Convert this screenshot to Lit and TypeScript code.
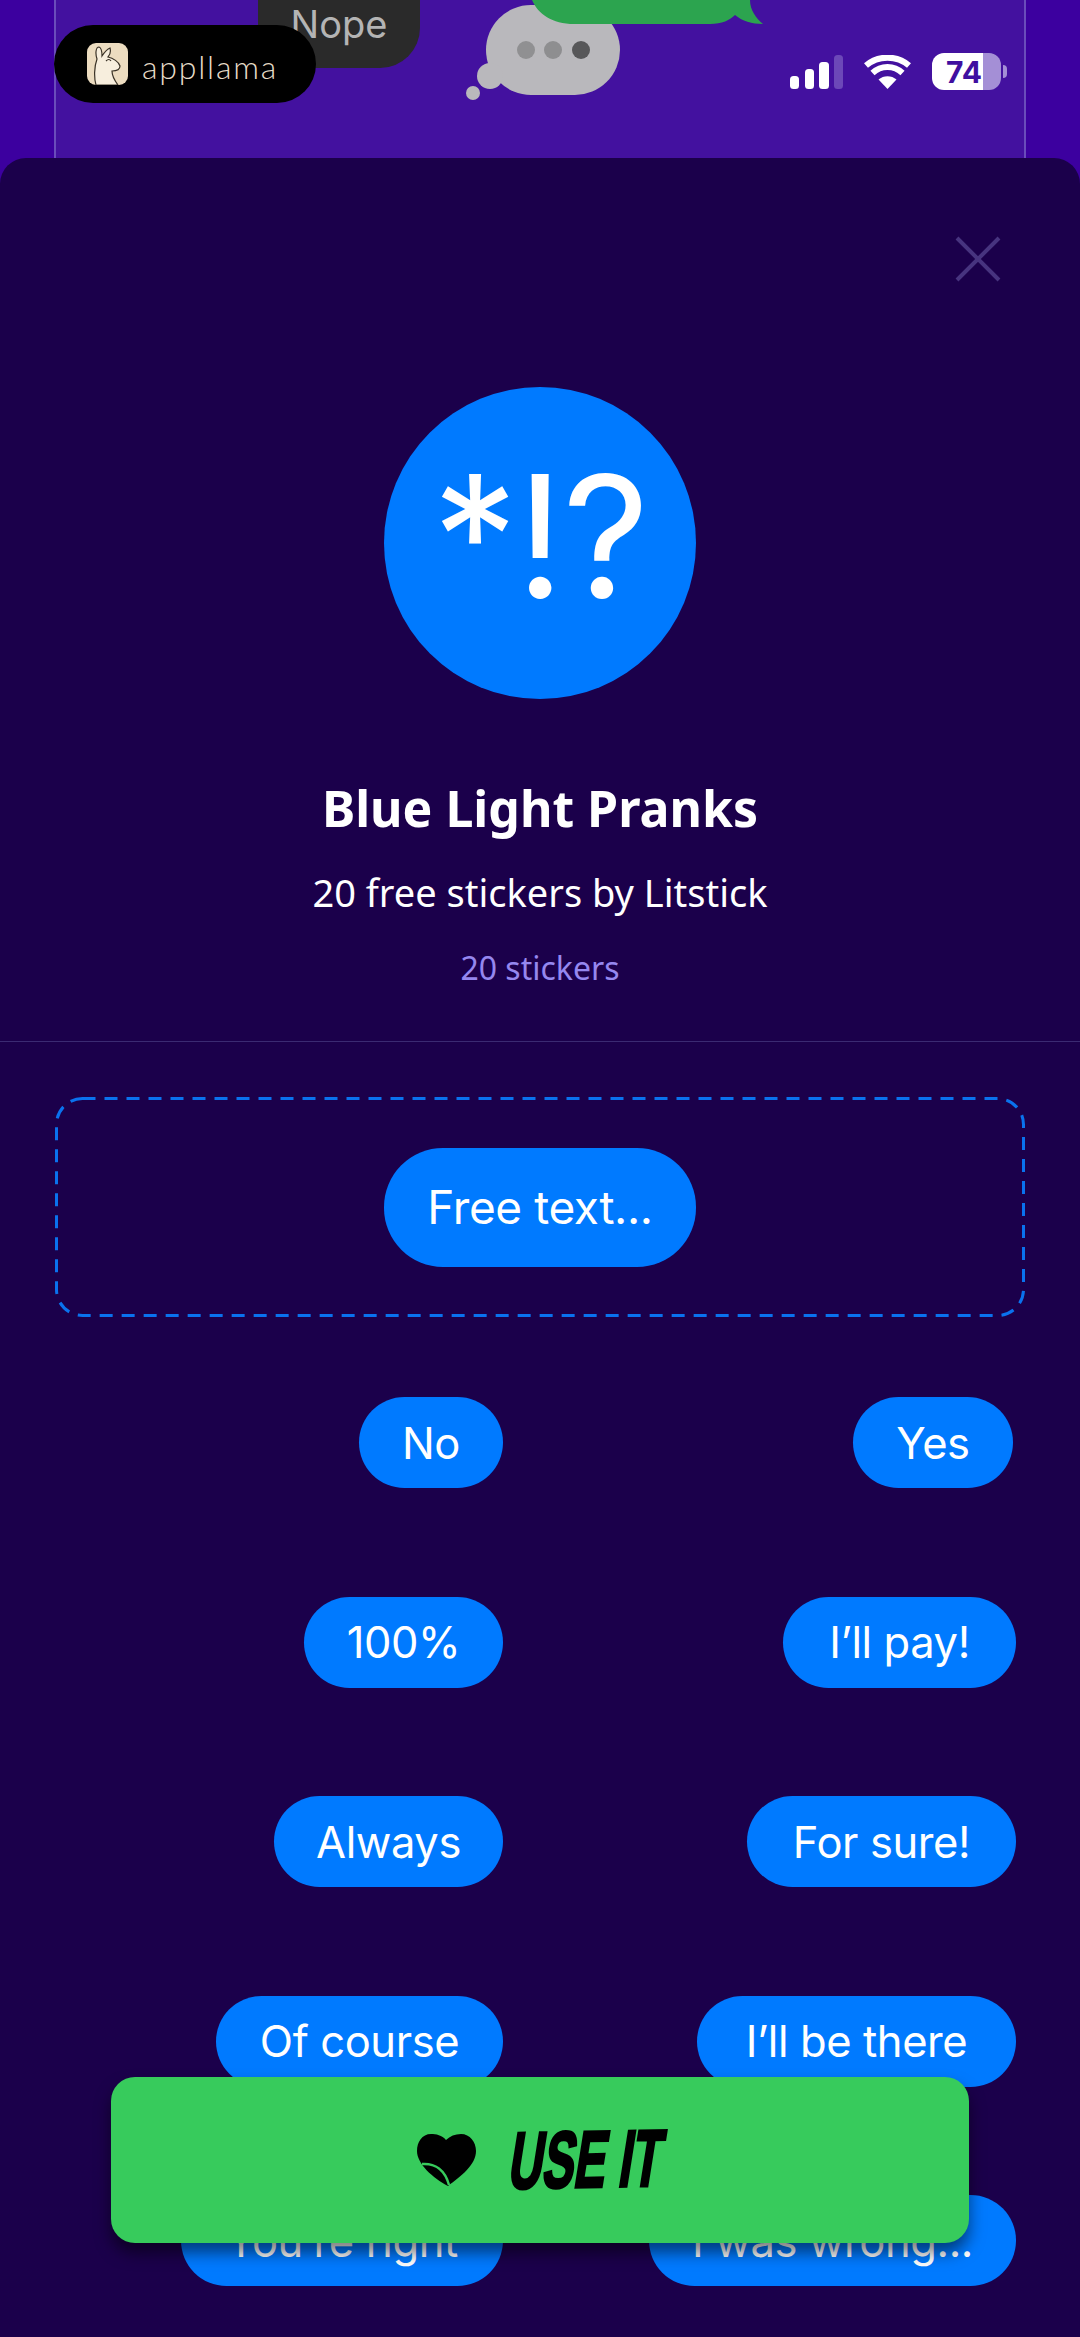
import { LitElement, html, css } from "lit";
import { customElement } from "lit/decorators.js";

type Sticker = { label: string; width: number };

const rows: [Sticker, Sticker][] = [
  [{ label: "No", width: 144 }, { label: "Yes", width: 160 }],
  [{ label: "100%", width: 199 }, { label: "I’ll pay!", width: 233 }],
  [{ label: "Always", width: 229 }, { label: "For sure!", width: 269 }],
  [{ label: "Of course", width: 287 }, { label: "I’ll be there", width: 319 }],
  [{ label: "You’re right", width: 322 }, { label: "I was wrong...", width: 367 }],
];

@customElement("app-root")
export class AppRoot extends LitElement {
  static styles = css`
    :host { display: block; width: 1080px; height: 2337px; overflow: hidden; position: relative; background: #1b004b; font-family: "Noto Sans", sans-serif; color: #fff; }
    .backdrop { height: 184px; background: #3c009f; position: relative; overflow: hidden; }
    .frame { position: absolute; left: 54px; right: 54px; top: -2px; bottom: -2px; background: #43119f; border: 2px solid #6a4cbb; }
    .nope { position: absolute; left: 258px; top: -40px; width: 162px; height: 108px; border-radius: 40px; background: #2a2a2a; color: #b4b4b4; font: 38px Inter, sans-serif; display: flex; justify-content: center; align-items: flex-end; padding-bottom: 21px; box-sizing: border-box; }
    .typing { position: absolute; left: 465px; top: 0; }
    .green { position: absolute; left: 530px; top: 0; }
    .brand { position: absolute; left: 54px; top: 25px; width: 262px; height: 78px; border-radius: 39px; background: #000; display: flex; align-items: center; gap: 14px; padding-left: 33px; box-sizing: border-box; }
    .brand-icon { width: 41px; height: 42px; display: block; }
    .brand-name { color: #e6dcc8; font: 300 32px Lato, sans-serif; letter-spacing: 1.8px; padding-top: 4px; }
    .status { position: absolute; left: 790px; top: 53px; display: flex; align-items: center; gap: 21px; }
    .status svg { display: block; }
    .battery { position: relative; width: 69px; height: 37px; }
    .battery-fill { position: absolute; inset: 0; border-radius: 12px; background: linear-gradient(90deg, #fff 0 74%, #a48fd6 74%); }
    .battery-num { position: absolute; left: 0; top: 0; width: 64px; height: 37px; display: flex; align-items: center; justify-content: center; color: #3f0fa0; font: 700 30px Inter, sans-serif; }
    .battery-tip { position: absolute; left: 71px; top: 12px; width: 4px; height: 13px; border-radius: 0 6px 6px 0; background: #a48fd6; }

    .sheet { height: 2179px; background: #1b004b; border-radius: 26px 26px 0 0; margin-top: -26px; position: relative; }
    .close { position: absolute; right: 79px; top: 78px; }
    .sheet-head { height: 884px; box-sizing: border-box; padding-top: 229px; border-bottom: 1px solid #3b2a72; display: flex; flex-direction: column; align-items: center; }
    .logo { width: 312px; height: 312px; border-radius: 50%; background: #007aff; display: flex; align-items: center; justify-content: center; font: 400 170px Inter, sans-serif; letter-spacing: -2px; }
    .logo span { padding-bottom: 14px; }
    h1 { margin: 79px 0 0; font: 700 50px/60px "Noto Sans", sans-serif; }
    .sub { margin-top: 30px; font: 400 38px/48px "Noto Sans", sans-serif; }
    .count { margin-top: 32px; font: 400 32px/40px "Noto Sans", sans-serif; color: #9587ef; }
    .free-box { margin: 55px 55px 0; height: 220px; position: relative; display: flex; align-items: center; justify-content: center; }
    .dash { position: absolute; inset: 0; display: block; }
    .pill { background: #007aff; color: #fff; font: 400 43.5px Inter, sans-serif; letter-spacing: -0.4px; border-radius: 46px; height: 91px; display: flex; align-items: center; justify-content: center; box-sizing: border-box; white-space: nowrap; }
    .free { width: 312px; height: 119px; border-radius: 59px; font-size: 46px; }
    .yes { margin-right: 3px; }
    .grid { display: grid; grid-template-columns: 503px 513px; grid-auto-rows: 91px; row-gap: 108.5px; margin-top: 80px; justify-items: end; }
    .cta-wrap { position: absolute; left: 111px; top: 2077px; width: 858px; height: 166px; border-radius: 24px; background: #37cb5c; box-shadow: 0 10px 16px rgba(0,0,0,.5); display: flex; align-items: center; justify-content: center; gap: 35px; color: #000; }
    .cta-text { display: inline-block; font: 700 80px "Liberation Sans", sans-serif; transform: rotate(-1deg) skewX(-10deg) scaleX(.59); -webkit-text-stroke: 3px #000; margin: 0 -53px; white-space: nowrap; }
    .heart { display: block; }
  `;
  render() {
    return html`
      <div class="backdrop">
        <div class="frame"></div>
        <div class="nope">Nope</div>
        <svg class="typing" width="160" height="105" viewBox="0 0 160 105">
          <rect x="21" y="5" width="134" height="90" rx="45" fill="#b9b8bc"/>
          <circle cx="25" cy="76" r="13" fill="#b9b8bc"/>
          <circle cx="8" cy="93" r="7" fill="#b9b8bc"/>
          <circle cx="61" cy="50" r="9" fill="#909092"/>
          <circle cx="88" cy="50" r="9" fill="#8e8e90"/>
          <circle cx="116" cy="50" r="9" fill="#575759"/>
        </svg>
        <svg class="green" width="240" height="30" viewBox="0 0 240 30">
          <path d="M2 0 C8 14 22 24 44 24 L180 24 C192 24 200 20 205 15 C212 21 222 24 233 24 C226 18 220 10 220 0Z" fill="#2ca44f"/>
        </svg>
        <div class="brand">
          <svg class="brand-icon" viewBox="0 0 41 42">
            <rect width="41" height="42" rx="9" fill="#ecdcc0"/>
            <path d="M10 16 C8 10 9 4 12 4 C15 5 15 10 15 13 C17 10 20 6 23 5 C24 9 23 12 21 14 C26 15 32 19 33 23 C33 27 29 28 25 28 C25 33 28 38 31 42 L9 42 C7 35 7 24 10 16Z" fill="#f7eedd" stroke="#3a3226" stroke-width="1.2"/>
            <path d="M19 18 q3 -3 5 0" fill="none" stroke="#3a3226" stroke-width="1.2"/>
          </svg>
          <span class="brand-name">appllama</span>
        </div>
        <div class="status">
          <svg width="53" height="34" viewBox="0 0 53 34">
            <rect x="0" y="21" width="9" height="13" rx="3.5" fill="#fff"/>
            <rect x="15" y="14" width="9" height="20" rx="3.5" fill="#fff"/>
            <rect x="29" y="7" width="10" height="27" rx="3.5" fill="#fff"/>
            <rect x="44" y="0" width="9" height="34" rx="3.5" fill="#6c48b8"/>
          </svg>
          <svg width="47" height="34" viewBox="0 0 47 34">
            <path d="M23.5 34 L14.5 24.5 C19.5 20 27.5 20 32.5 24.5Z" fill="#fff"/>
            <path d="M8.5 18 C17 10 30 10 38.5 18" stroke="#fff" stroke-width="6" fill="none"/>
            <path d="M2 10.5 C14 0 33 0 45 10.5" stroke="#fff" stroke-width="6" fill="none"/>
          </svg>
          <div class="battery"><div class="battery-fill"></div><div class="battery-tip"></div><div class="battery-num">74</div></div>
        </div>
      </div>
      <div class="sheet">
        <svg class="close" width="46" height="46" viewBox="0 0 46 46"><path d="M2 2 L44 44 M44 2 L2 44" stroke="#47347f" stroke-width="4"/></svg>
        <div class="sheet-head">
          <div class="logo"><span>*!?</span></div>
          <h1>Blue Light Pranks</h1>
          <div class="sub">20 free stickers by Litstick</div>
          <div class="count">20 stickers</div>
        </div>
        <div class="free-box">
          <svg class="dash" width="970" height="220" viewBox="0 0 970 220">
            <rect x="1.5" y="1.5" width="967" height="217" rx="26" fill="none" stroke="#0a72ee" stroke-width="3" stroke-dasharray="13 9"/>
          </svg>
          <div class="pill free">Free text...</div>
        </div>
        <div class="grid">
          ${rows.flatMap(([a, b]) => [
            html`<div class="pill" style="width:${a.width}px">${a.label}</div>`,
            html`<div class="pill ${b.label === "Yes" ? "yes" : ""}" style="width:${b.width}px">${b.label}</div>`,
          ])}
        </div>
      </div>
      <div class="cta-wrap">
        <svg class="heart" width="59" height="52" viewBox="0 0 59 52">
          <path d="M29 6 C25 1 19 0 14 0 C5 0 0 8 0 17 C0 30 16 44 31 52 C44 42 59 31 59 17 C59 8 53 0 44 0 C38 0 33 2 29 6Z" fill="#000"/>
          <path d="M5 30 C18 29 28 36 32 51" stroke="#37cb5c" stroke-width="2.5" fill="none"/>
        </svg>
        <span class="cta-text">USE IT</span>
      </div>
    `;
  }
}
